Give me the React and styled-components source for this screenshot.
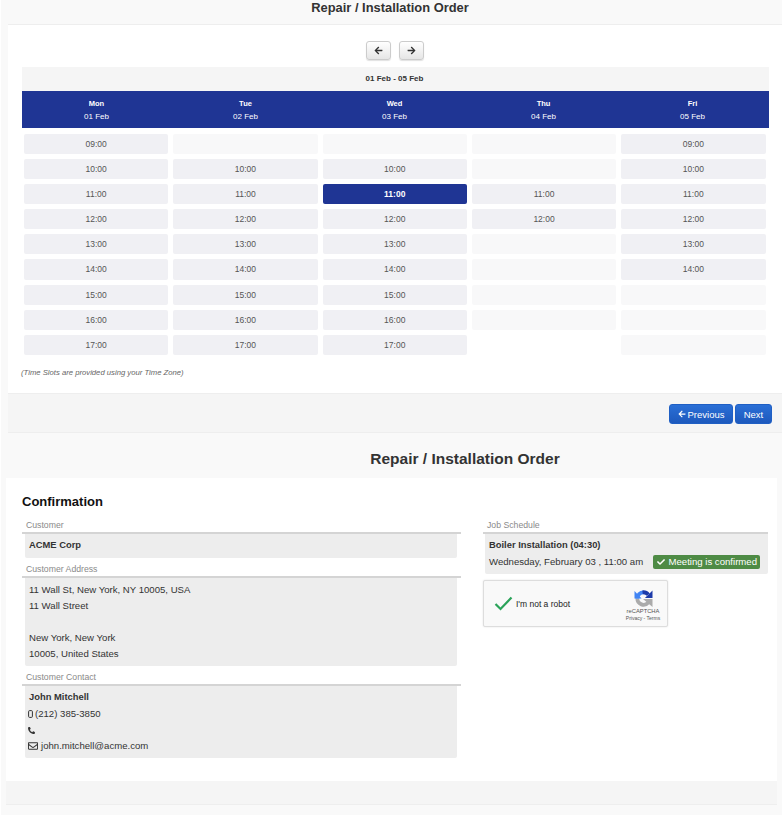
import React from 'react';
import styled, { createGlobalStyle } from 'styled-components';
import { FaArrowLeft, FaArrowRight, FaCheck, FaPhoneAlt, FaRegEnvelope } from 'react-icons/fa';

const Global = createGlobalStyle`
  html, body { margin: 0; padding: 0; background: #fff; }
  body { font-family: "Liberation Sans", Arial, sans-serif; color: #333; }
`;

const Page = styled.div`
  width: 781px;
  height: 815px;
  margin-left: 1px;
  overflow: hidden;
  background: #f9f9f9;
`;

const Title = styled.h2`
  margin: 0;
  text-align: center;
  font-weight: 700;
  color: #333;
  font-size: ${p => p.$size}px;
  line-height: ${p => p.$line}px;
  padding-left: ${p => p.$left || 0}px;
  padding-right: ${p => p.$right || 0}px;
  padding-bottom: ${p => p.$bottom || 0}px;
`;

const PanelA = styled.section`
  margin-left: 7px;
  display: flex;
  flex-direction: column;
`;

const Body = styled.div`
  background: #fff;
  border-top: 1px solid #eee;
  height: 369px;
  padding: 16px 13px 0 14px;
  box-sizing: border-box;
`;

const NavRow = styled.div`
  display: flex;
  justify-content: center;
  gap: 8px;
  height: 26px;
  padding-right: 1px;
`;

const NavBtn = styled.button`
  width: 25px;
  height: 19px;
  padding: 0;
  border: 1px solid #ccc;
  border-radius: 3px;
  background: linear-gradient(#fff, #e6e6e6);
  box-shadow: 0 1px 1px rgba(0,0,0,.12);
  color: #333;
  font-size: 9px;
  display: flex;
  align-items: center;
  justify-content: center;
`;

const RangeBar = styled.div`
  height: 24px;
  background: #f5f5f5;
  text-align: center;
  font-size: 8px;
  font-weight: 700;
  line-height: 23px;
  color: #333;
  padding-right: 2px;
`;

const HeadRow = styled.div`
  display: grid;
  grid-template-columns: repeat(5, 1fr);
  height: 37px;
  background: #1f3594;
  color: #fff;
  text-align: center;
  font-size: 8px;
  padding-right: 2px;
`;

const HeadCell = styled.div`
  padding-top: 6px;
  line-height: 13px;
`;

const DayName = styled.div`
  font-weight: 700;
  font-size: 7.5px;
`;

const Slots = styled.div`
  display: grid;
  grid-template-columns: repeat(5, 1fr);
  column-gap: 5px;
  row-gap: 5px;
  grid-auto-rows: 20.1px;
  padding: 6px 3.5px 0 2px;
`;

const Slot = styled.div`
  border-radius: 2px;
  font-size: 8.5px;
  line-height: 20px;
  text-align: center;
  color: ${p => (p.$kind === 'sel' ? '#fff' : '#555')};
  font-weight: ${p => (p.$kind === 'sel' ? 700 : 400)};
  background: ${p =>
    p.$kind === 'sel' ? '#1f3594' : p.$kind === 'on' ? '#f0f0f4' : p.$kind === 'off' ? '#f8f8f9' : 'transparent'};
`;

const Note = styled.p`
  margin: 13px 0 0 -1px;
  font-size: 7.7px;
  font-style: italic;
  color: #666;
  line-height: 10px;
`;

const FooterA = styled.div`
  height: 40px;
  background: #f5f5f5;
  border-top: 1px solid #eee;
  border-bottom: 1px solid #eee;
  box-sizing: border-box;
  display: flex;
  justify-content: flex-end;
  align-items: flex-start;
  gap: 2px;
  padding: 10px 10px 0 0;
`;

const PrimaryBtn = styled.button`
  height: 20px;
  width: ${p => p.$w}px;
  padding: 0;
  border: 1px solid #1f5fc4;
  border-radius: 3px;
  background: linear-gradient(#2a6fd6, #1d59bd);
  color: #fff;
  font: 400 9.5px "Liberation Sans", Arial, sans-serif;
  display: flex;
  align-items: center;
  justify-content: center;
  gap: 2px;
`;

const SectionB = styled.section`
  padding-top: 17px;
`;

const PanelB = styled.div`
  margin: 10px 5px 0 5px;
`;

const CardB = styled.div`
  height: 303px;
  background: #fff;
  box-sizing: border-box;
  padding: 16px 9px 0 16px;
`;

const ConfirmTitle = styled.h3`
  margin: 0 0 10px;
  font-size: 13px;
  line-height: 16px;
  font-weight: 700;
  color: #111;
`;

const Columns = styled.div`
  display: grid;
  grid-template-columns: 439px 285px;
  column-gap: 22px;
`;

const Column = styled.div`
  display: flex;
  flex-direction: column;
  align-items: flex-start;
`;

const Label = styled.div`
  width: 100%;
  box-sizing: border-box;
  padding-left: 4px;
  font-size: 8.7px;
  line-height: 11px;
  color: #8a8a8a;
  border-bottom: 2px solid #d4d4d4;
  padding-bottom: 1px;
`;

const InfoBox = styled.div`
  width: ${p => p.$w || 432}px;
  margin-left: ${p => p.$ml ?? 3}px;
  margin-bottom: 6px;
  padding: 4px;
  box-sizing: border-box;
  background: #ededed;
  border-radius: 0 0 2px 2px;
  font-size: 9.6px;
  line-height: 16px;
  color: #333;
`;

const Strong = styled.div`
  font-weight: 700;
  font-size: 9.4px;
  margin-top: -1px;
  margin-bottom: 1px;
`;

const IconLine = styled.div`
  display: flex;
  align-items: center;
  gap: ${p => p.$gap ?? 2}px;
  height: 16px;
  margin-left: -1px;
`;

const ScheduleLine = styled.div`
  display: flex;
  align-items: center;
  justify-content: space-between;
  padding-right: 4px;
`;

const Badge = styled.span`
  display: inline-flex;
  align-items: center;
  gap: 3px;
  height: 14px;
  padding: 0 3px 0 4px;
  background: #4e8b45;
  color: #fff;
  border-radius: 2px;
  font-size: 9.6px;
`;

const Captcha = styled.div`
  width: 185px;
  height: 47px;
  background: #f9f9f9;
  border: 1px solid #ddd;
  border-radius: 2px;
  box-shadow: 0 0 2px rgba(0,0,0,.12);
  box-sizing: border-box;
  display: flex;
  align-items: center;
  padding-left: 10px;
`;

const CaptchaText = styled.span`
  margin-left: 3px;
  font-size: 8.5px;
  color: #222;
  flex: 1;
`;

const CaptchaBrand = styled.div`
  width: 40px;
  margin-right: 4px;
  display: flex;
  flex-direction: column;
  align-items: center;
  padding-top: 4px;
`;

const BrandLine = styled.span`
  font-size: ${p => p.$size}px;
  line-height: 7px;
  color: #555;
  white-space: nowrap;
`;

const FooterB = styled.div`
  height: 24px;
  background: #f5f5f5;
  border-bottom: 1px solid #eee;
  box-sizing: border-box;
`;

const MobileIcon = () => (
  <svg width="5" height="8" viewBox="0 0 5 8">
    <rect x="0.6" y="0.6" width="3.800" height="6.800" rx="1" fill="none" stroke="#333" strokeWidth="1" />
  </svg>
);

const RecaptchaLogo = () => (
  <svg width="19" height="19" viewBox="0 0 20 20">
    <path d="M3.500 10A6.500 6.500 0 0 0 15 14.200" fill="none" stroke="#ababab" strokeWidth="4" />
    <polygon points="9.500,10.500 19.500,10.500 19.500,19" fill="#ababab" />
    <path d="M10 3.500A6.500 6.500 0 0 0 3.500 10" fill="none" stroke="#4285f4" strokeWidth="4" />
    <polygon points="0.500,2 0.500,10 8,10" fill="#4285f4" />
    <path d="M9 3.500A6.500 6.500 0 0 1 15 6" fill="none" stroke="#1c3aa9" strokeWidth="4" />
    <polygon points="19.500,1.500 19.500,9.500 11.500,9.500" fill="#1c3aa9" />
  </svg>
);

const days = [['Mon', '01 Feb'], ['Tue', '02 Feb'], ['Wed', '03 Feb'], ['Thu', '04 Feb'], ['Fri', '05 Feb']];
const rows = [
  ['09:00', 'on', 'off', 'off', 'off', 'on'],
  ['10:00', 'on', 'on', 'on', 'off', 'on'],
  ['11:00', 'on', 'on', 'sel', 'on', 'on'],
  ['12:00', 'on', 'on', 'on', 'on', 'on'],
  ['13:00', 'on', 'on', 'on', 'off', 'on'],
  ['14:00', 'on', 'on', 'on', 'off', 'on'],
  ['15:00', 'on', 'on', 'on', 'off', 'off'],
  ['16:00', 'on', 'on', 'on', 'off', 'off'],
  ['17:00', 'on', 'on', 'on', 'none', 'off'],
];

export default function App() {
  return (
    <Page>
      <Global />
      <Title $size={12.9} $line={16} $bottom={8} $right={3}>Repair / Installation Order</Title>
      <PanelA>
        <Body>
          <NavRow>
            <NavBtn aria-label="Previous week"><FaArrowLeft /></NavBtn>
            <NavBtn aria-label="Next week"><FaArrowRight /></NavBtn>
          </NavRow>
          <RangeBar>01 Feb - 05 Feb</RangeBar>
          <HeadRow>
            {days.map(([d, t]) => (
              <HeadCell key={d}>
                <DayName>{d}</DayName>
                <div>{t}</div>
              </HeadCell>
            ))}
          </HeadRow>
          <Slots>
            {rows.map(([time, ...kinds]) =>
              kinds.map((k, i) => (
                <Slot key={time + i} $kind={k}>
                  {k === 'on' || k === 'sel' ? time : ''}
                </Slot>
              ))
            )}
          </Slots>
          <Note>(Time Slots are provided using your Time Zone)</Note>
        </Body>
        <FooterA>
          <PrimaryBtn $w={64}><FaArrowLeft size={8} /> Previous</PrimaryBtn>
          <PrimaryBtn $w={37}>Next</PrimaryBtn>
        </FooterA>
      </PanelA>
      <SectionB>
        <Title $size={15.5} $line={18} $left={147}>Repair / Installation Order</Title>
        <PanelB>
          <CardB>
            <ConfirmTitle>Confirmation</ConfirmTitle>
            <Columns>
              <Column>
                <Label>Customer</Label>
                <InfoBox><Strong>ACME Corp</Strong></InfoBox>
                <Label>Customer Address</Label>
                <InfoBox>
                  <div>11 Wall St, New York, NY 10005, USA</div>
                  <div>11 Wall Street</div>
                  <div>&nbsp;</div>
                  <div>New York, New York</div>
                  <div>10005, United States</div>
                </InfoBox>
                <Label>Customer Contact</Label>
                <InfoBox>
                  <Strong>John Mitchell</Strong>
                  <IconLine><MobileIcon /> (212) 385-3850</IconLine>
                  <IconLine><FaPhoneAlt size={7} /></IconLine>
                  <IconLine $gap={3}><FaRegEnvelope size={10} /> john.mitchell@acme.com</IconLine>
                </InfoBox>
              </Column>
              <Column>
                <Label>Job Schedule</Label>
                <InfoBox $w={283} $ml={2}>
                  <Strong>Boiler Installation (04:30)</Strong>
                  <ScheduleLine>
                    <span>Wednesday, February 03 , 11:00 am</span>
                    <Badge><FaCheck size={8} /> Meeting is confirmed</Badge>
                  </ScheduleLine>
                </InfoBox>
                <Captcha>
                  <svg width="19" height="15" viewBox="0 0 19 15">
                    <path d="M1.500 8l5 5L17.500 1.500" fill="none" stroke="#2ba35a" strokeWidth="2.200" />
                  </svg>
                  <CaptchaText>I'm not a robot</CaptchaText>
                  <CaptchaBrand>
                    <RecaptchaLogo />
                    <BrandLine $size={5.8}>reCAPTCHA</BrandLine>
                    <BrandLine $size={5}>Privacy - Terms</BrandLine>
                  </CaptchaBrand>
                </Captcha>
              </Column>
            </Columns>
          </CardB>
          <FooterB />
        </PanelB>
      </SectionB>
    </Page>
  );
}
